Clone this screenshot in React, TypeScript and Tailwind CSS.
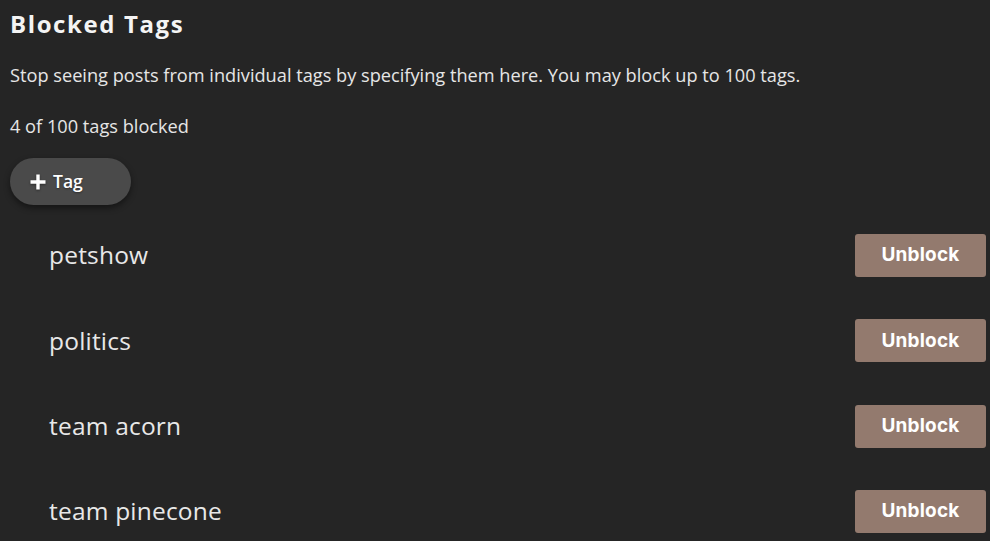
const tags = ["petshow", "politics", "team acorn", "team pinecone"];

const PlusIcon = () => (
  <svg width="16" height="16" viewBox="0 0 16 16" className="drop-shadow-[0_1px_1px_rgba(0,0,0,0.4)]">
    <path d="M8 0.5v15M0.5 8h15" stroke="currentColor" strokeWidth="3.4" />
  </svg>
);

const TagRow = ({ name }: { name: string }) => (
  <li className="flex items-center justify-between h-[85.3px] pl-[39px]">
    <span className="text-[24.5px] text-[#e8e8e8] tracking-[0.2px]">{name}</span>
    <button className="w-[131px] h-[43px] rounded-[3px] bg-[#937a6e] text-white text-[19px] font-bold font-['Inter',sans-serif] tracking-[0.2px]">
      Unblock
    </button>
  </li>
);

export default function App() {
  return (
    <div className="min-h-[541px] bg-[#252525] text-[#e6e6e6] font-['Open_Sans',sans-serif] pl-[10px] pr-[4px] pt-[7px] overflow-hidden">
      <h1 className="text-[24px] font-bold tracking-[1.6px] text-[#f4f4f4] leading-[34px]">
        Blocked Tags
      </h1>
      <p className="mt-[21px] text-[18.2px] leading-[26px]">
        Stop seeing posts from individual tags by specifying them here. You may
        block up to 100 tags.
      </p>
      <p className="mt-[25px] text-[18.2px] leading-[26px]">4 of 100 tags blocked</p>
      <button className="mt-[19px] flex items-center gap-[7px] w-[121px] h-[47px] pl-[20px] rounded-full bg-[#4a4a4a] shadow-[0_3px_6px_rgba(0,0,0,0.45)] text-white text-[17.5px] font-semibold [text-shadow:0_1px_2px_rgba(0,0,0,0.4)]">
        <PlusIcon />
        Tag
      </button>
      <ul className="mt-[8px]">
        {tags.map((t) => (
          <TagRow key={t} name={t} />
        ))}
      </ul>
    </div>
  );
}
